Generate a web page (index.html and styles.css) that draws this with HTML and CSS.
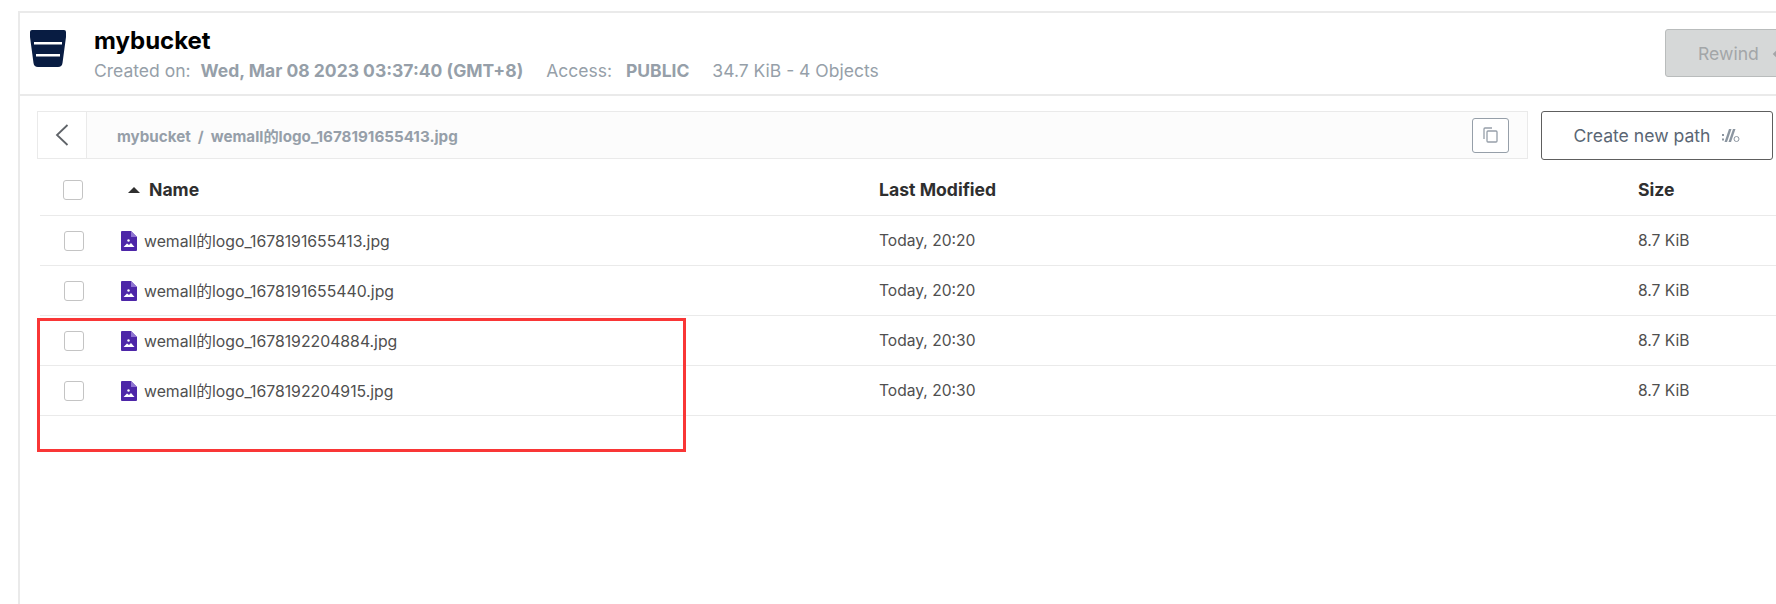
FILE: index.html
```html
<!DOCTYPE html>
<html lang="en">

<head>
  <meta charset="UTF-8">
  <meta name="viewport" content="width=device-width, initial-scale=1.0">
  <title>mybucket</title>
  <link rel="stylesheet" href="styles.css">
</head>

<body>
  <div class="panel">
    <div class="bucket-header">
      <svg class="bucket-icon" viewBox="0 0 36 37">
        <path d="M2 0H34Q36 0 36 2V7L32.500 33Q32 37 28 37H8Q4 37 3.500 33L0 7V2Q0 0 2 0Z" fill="#081c42" />
        <rect x="4" y="12" width="28" height="2.500" fill="#fff" />
        <rect x="6" y="24" width="24" height="2.500" fill="#fff" />
      </svg>
      <div class="bucket-info">
        <div class="bucket-name">mybucket</div>
        <div class="bucket-meta">
          <span>Created on:</span><b class="created">Wed, Mar 08 2023 03:37:40 (GMT+8)</b>
          <span class="access">Access:</span><b class="public">PUBLIC</b>
          <span class="usage">34.7 KiB - 4 Objects</span>
        </div>
      </div>
      <button class="rewind">
        Rewind
        <svg class="rewind-icon" width="14" height="14" viewBox="0 0 14 14" fill="none" stroke="#a3a6a8" stroke-width="1.800">
          <path d="M12 1V8H2M5.500 4.500L2 8L5.500 11.500" />
        </svg>
      </button>
    </div>

    <div class="toolbar">
      <div class="breadcrumb">
        <div class="back">
          <svg width="14" height="22" viewBox="0 0 14 22">
            <path d="M12.500 1L2 11L12.500 21" fill="none" stroke="#5f6368" stroke-width="1.800" />
          </svg>
        </div>
        <div class="path">mybucket<span class="sep">/</span>wemall的logo_1678191655413.jpg</div>
        <div class="copy">
          <svg width="16" height="16" viewBox="0 0 16 16" fill="none" stroke="#969fa9" stroke-width="1.300">
            <path d="M1 12V2Q1 1 2 1H9" />
            <rect x="4" y="4" width="10" height="11" rx="1" />
          </svg>
        </div>
      </div>
      <button class="create-path">
        Create new path
        <svg width="18" height="16" viewBox="0 0 18 16" fill="#8b95a0">
          <rect x="0" y="6" width="2" height="2" />
          <rect x="0" y="10.500" width="2" height="2" />
          <path d="M7 1H9.500L5 14H2.500Z" />
          <path d="M11 1H13.500L9 14H6.500Z" />
          <circle cx="14.500" cy="11" r="2.500" fill="none" stroke="#8b95a0" />
        </svg>
      </button>
    </div>

    <div class="table">
      <div class="row head">
        <div class="check-col"><span class="checkbox"></span></div>
        <div class="name-col"><span class="sort-arrow"></span>Name</div>
        <div>Last Modified</div>
        <div>Size</div>
      </div>
      <div class="row">
        <div class="check-col"><span class="checkbox"></span></div>
        <div class="name-col">
          <svg class="file-icon" viewBox="0 0 16 20">
            <path d="M1 0H10L16 6V19Q16 20 15 20H1Q0 20 0 19V1Q0 0 1 0Z" fill="#4d26a8" />
            <path d="M10 0L16 6H10Z" fill="#8f74d2" />
            <circle cx="7.500" cy="9.500" r="1.200" fill="#fff" />
            <path d="M2.500 16L6 12.500L8 14L10 12L13.500 16Z" fill="#fff" />
          </svg>
          wemall的logo_1678191655413.jpg
        </div>
        <div>Today, 20:20</div>
        <div>8.7 KiB</div>
      </div>
      <div class="row">
        <div class="check-col"><span class="checkbox"></span></div>
        <div class="name-col">
          <svg class="file-icon" viewBox="0 0 16 20">
            <path d="M1 0H10L16 6V19Q16 20 15 20H1Q0 20 0 19V1Q0 0 1 0Z" fill="#4d26a8" />
            <path d="M10 0L16 6H10Z" fill="#8f74d2" />
            <circle cx="7.500" cy="9.500" r="1.200" fill="#fff" />
            <path d="M2.500 16L6 12.500L8 14L10 12L13.500 16Z" fill="#fff" />
          </svg>
          wemall的logo_1678191655440.jpg
        </div>
        <div>Today, 20:20</div>
        <div>8.7 KiB</div>
      </div>
      <div class="row">
        <div class="check-col"><span class="checkbox"></span></div>
        <div class="name-col">
          <svg class="file-icon" viewBox="0 0 16 20">
            <path d="M1 0H10L16 6V19Q16 20 15 20H1Q0 20 0 19V1Q0 0 1 0Z" fill="#4d26a8" />
            <path d="M10 0L16 6H10Z" fill="#8f74d2" />
            <circle cx="7.500" cy="9.500" r="1.200" fill="#fff" />
            <path d="M2.500 16L6 12.500L8 14L10 12L13.500 16Z" fill="#fff" />
          </svg>
          wemall的logo_1678192204884.jpg
        </div>
        <div>Today, 20:30</div>
        <div>8.7 KiB</div>
      </div>
      <div class="row">
        <div class="check-col"><span class="checkbox"></span></div>
        <div class="name-col">
          <svg class="file-icon" viewBox="0 0 16 20">
            <path d="M1 0H10L16 6V19Q16 20 15 20H1Q0 20 0 19V1Q0 0 1 0Z" fill="#4d26a8" />
            <path d="M10 0L16 6H10Z" fill="#8f74d2" />
            <circle cx="7.500" cy="9.500" r="1.200" fill="#fff" />
            <path d="M2.500 16L6 12.500L8 14L10 12L13.500 16Z" fill="#fff" />
          </svg>
          wemall的logo_1678192204915.jpg
        </div>
        <div>Today, 20:30</div>
        <div>8.7 KiB</div>
      </div>
    </div>
  </div>

  <!-- red annotation drawn over the table -->
  <div class="highlight"></div>
</body>

</html>
```

FILE: styles.css
```css
* {
  box-sizing: border-box;
}

body {
  margin: 0;
  height: 604px;
  overflow: hidden;
  background: #fff;
  font-family: Inter, "Noto Sans CJK SC", sans-serif;
  position: relative;
}

.panel {
  margin: 11px 0 0 18px;
  height: 593px;
  border-left: 2px solid #eaeaea;
  border-top: 2px solid #eaeaea;
  overflow: hidden;
}

.bucket-header {
  display: flex;
  height: 83px;
  padding: 17px 0 0 10px;
  border-bottom: 2px solid #eaeaea;
  overflow: hidden;
}

.bucket-icon {
  width: 36px;
  height: 37px;
  flex: none;
}

.bucket-info {
  margin: -4px 0 0 28px;
  flex: 1;
}

.bucket-name {
  font-size: 24px;
  font-weight: 700;
  line-height: 29px;
  color: #000;
}

.bucket-meta {
  margin-top: 5px;
  font-size: 17.500px;
  line-height: 22px;
  color: #969fa9;
  white-space: nowrap;
}

.created {
  margin-left: 10px;
}

.access {
  margin-left: 18px;
}

.public {
  margin-left: 14px;
}

.usage {
  margin-left: 18px;
}

.rewind {
  display: flex;
  align-items: center;
  gap: 13px;
  flex: none;
  width: 130px;
  height: 48px;
  margin: -1px -19px 0 0;
  padding: 0 0 0 32px;
  border: 1px solid #b9bcbc;
  border-radius: 3px;
  background: #d6d8d8;
  color: #a3a6a8;
  font: 17.600px Inter, sans-serif;
}

.rewind-icon {
  flex: none;
}

.toolbar {
  display: flex;
  margin: 15px 3px 0 17px;
  gap: 13px;
}

.breadcrumb {
  flex: 1;
  display: flex;
  align-items: center;
  height: 48px;
  background: #fcfcfc;
  border: 1px solid #eaeaea;
}

.back {
  display: flex;
  align-items: center;
  justify-content: center;
  width: 49px;
  height: 100%;
  background: #fff;
  border-right: 1px solid #eaeaea;
  flex: none;
}

.path {
  flex: 1;
  padding-left: 30px;
  font-size: 15.200px;
  font-weight: 700;
  color: #969fa9;
}

.sep {
  margin: 0 7px;
}

.copy {
  display: flex;
  align-items: center;
  justify-content: center;
  width: 37px;
  height: 35px;
  margin-right: 18px;
  border: 1px solid #969fa9;
  border-radius: 3px;
  background: #fff;
}

.create-path {
  display: flex;
  align-items: center;
  justify-content: center;
  gap: 12px;
  width: 232px;
  height: 49px;
  flex: none;
  border: 1px solid #5e5e5e;
  border-radius: 3px;
  background: #fff;
  color: #5a6674;
  font: 17.600px Inter, sans-serif;
}

.table {
  margin: 6px 0 0 20px;
}

.row {
  display: grid;
  grid-template-columns: 80px 759px 1fr 138px;
  align-items: center;
  height: 50px;
  font-size: 15.600px;
  color: #4f4f4f;
  border-bottom: 1px solid #eaeaea;
}

.row.head {
  padding-bottom: 2px;
  font-size: 17.600px;
  font-weight: 700;
  color: #2f2f2f;
}

.check-col {
  display: flex;
  padding-left: 24px;
}

.head .check-col {
  padding-left: 23px;
}

.checkbox {
  width: 20px;
  height: 20px;
  border: 1px solid #c4c4c4;
  border-radius: 3px;
  background: #fff;
}

.name-col {
  display: flex;
  align-items: center;
  white-space: nowrap;
  font-size: 15.800px;
}

.head .name-col {
  padding-left: 8px;
  font-size: 17.600px;
}

.sort-arrow {
  width: 0;
  height: 0;
  margin-right: 9px;
  border-left: 6px solid transparent;
  border-right: 6px solid transparent;
  border-bottom: 6px solid #2f2f2f;
}

.file-icon {
  width: 16px;
  height: 20px;
  margin-right: 7px;
  margin-left: 1px;
  flex: none;
}

.highlight {
  position: absolute;
  left: 37px;
  top: 318px;
  width: 649px;
  height: 134px;
  border: 3px solid #f93636;
}
```
